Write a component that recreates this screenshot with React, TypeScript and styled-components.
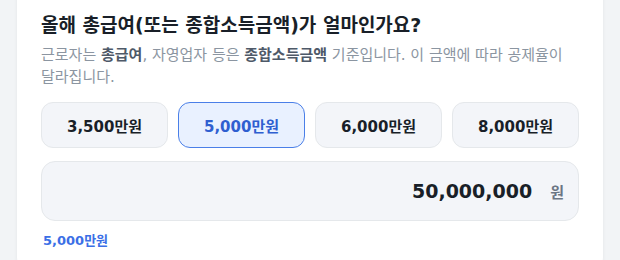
import { useState } from "react";
import styled, { createGlobalStyle } from "styled-components";

const GlobalStyle = createGlobalStyle`
  html, body {
    margin: 0;
    padding: 0;
    background: #f2f4f6;
    font-family: "DejaVu Sans", "Noto Sans CJK KR", sans-serif;
  }
`;

const Page = styled.div`
  padding: 0 17px;
`;

const Card = styled.section`
  margin-top: -20px;
  background: #ffffff;
  border-radius: 0 0 16px 16px;
  box-shadow: 0 1px 4px rgba(15, 23, 42, 0.06);
  padding: 32px 24px 24px;
  word-break: keep-all;
`;

const Title = styled.h2`
  margin: 0;
  font-size: 19px;
  line-height: 26px;
  font-weight: 700;
  color: #191f28;
`;

const Desc = styled.p`
  margin: 6px 0 0;
  font-size: 15px;
  line-height: 22px;
  color: #8b95a1;

  b {
    color: #4e5968;
    font-weight: 700;
  }
`;

const Presets = styled.div`
  display: grid;
  grid-template-columns: repeat(4, 1fr);
  gap: 10px;
  margin-top: 14px;
`;

const Preset = styled.button<{ $active: boolean }>`
  height: 46px;
  border-radius: 12px;
  border: 1px solid ${({ $active }) => ($active ? "#4a7fe8" : "#e5e8eb")};
  background: ${({ $active }) => ($active ? "#e9f1ff" : "#f3f5f9")};
  color: ${({ $active }) => ($active ? "#2f5fd0" : "#191f28")};
  font-family: inherit;
  font-size: 15px;
  font-weight: 700;
  cursor: pointer;
`;

const Field = styled.label`
  display: flex;
  align-items: center;
  height: 60px;
  margin-top: 13px;
  padding: 0 14px 0 16px;
  box-sizing: border-box;
  border: 1px solid #e5e8eb;
  border-radius: 14px;
  background: #f3f5f9;
`;

const Amount = styled.input`
  flex: 1;
  min-width: 0;
  padding: 0;
  border: none;
  outline: none;
  background: transparent;
  text-align: right;
  font-family: inherit;
  font-size: 19px;
  font-weight: 700;
  color: #191f28;
`;

const Unit = styled.span`
  margin-left: 18px;
  font-size: 15px;
  font-weight: 700;
  color: #6b7684;
`;

const Hint = styled.div`
  margin-top: 9px;
  padding-left: 2px;
  font-size: 13px;
  font-weight: 700;
  color: #3b6fe6;
`;

const options = [3500, 5000, 6000, 8000];

const fmt = (n: number) => n.toLocaleString("en-US");

export default function App() {
  const [value, setValue] = useState(5000);

  return (
    <Page>
      <GlobalStyle />
      <Card>
        <Title>올해 총급여(또는 종합소득금액)가 얼마인가요?</Title>
        <Desc>
          근로자는 <b>총급여</b>, 자영업자 등은 <b>종합소득금액</b> 기준입니다. 이 금액에
          따라 공제율이 달라집니다.
        </Desc>
        <Presets>
          {options.map((o) => (
            <Preset key={o} $active={o === value} onClick={() => setValue(o)}>
              {fmt(o)}만원
            </Preset>
          ))}
        </Presets>
        <Field>
          <Amount
            value={fmt(value * 10000)}
            onChange={(e) => {
              const n = Number(e.target.value.replace(/[^0-9]/g, ""));
              setValue(Math.round(n / 10000));
            }}
          />
          <Unit>원</Unit>
        </Field>
        <Hint>{fmt(value)}만원</Hint>
      </Card>
    </Page>
  );
}
